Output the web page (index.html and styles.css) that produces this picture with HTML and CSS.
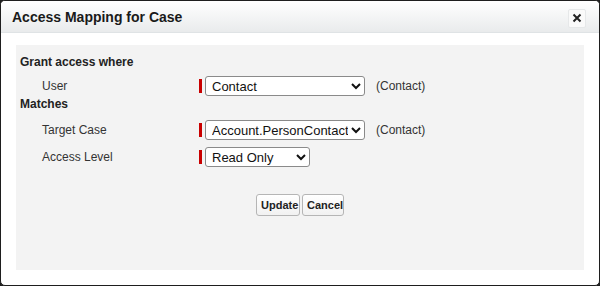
FILE: index.html
```html
<!DOCTYPE html>
<html>
<head>
<meta charset="utf-8">
<link rel="stylesheet" href="styles.css">
</head>
<body>
<div class="dialog">
  <div class="header">
    <h2 class="title">Access Mapping for Case</h2>
    <button class="close" type="button" aria-label="Close"><svg width="10" height="10" viewBox="0 0 10 10"><path d="M1.5 1.5 L8.5 8.5 M8.5 1.5 L1.5 8.5" stroke="#222" stroke-width="2" stroke-linecap="butt" fill="none"/></svg></button>
  </div>
  <div class="content">
    <div class="panel">
      <h3 class="section">Grant access where</h3>
      <div class="field first">
        <label class="label">User</label>
        <span class="req"></span>
        <select class="sel wide"><option>Contact</option></select>
        <span class="note">(Contact)</span>
      </div>
      <h3 class="section matches">Matches</h3>
      <div class="field second">
        <label class="label">Target Case</label>
        <span class="req"></span>
        <select class="sel wide"><option>Account.PersonContact</option></select>
        <span class="note">(Contact)</span>
      </div>
      <div class="field third">
        <label class="label">Access Level</label>
        <span class="req"></span>
        <select class="sel narrow"><option>Read Only</option></select>
      </div>
      <div class="buttons">
        <button class="btn upd" type="button">Update</button>
        <button class="btn cancel" type="button">Cancel</button>
      </div>
    </div>
  </div>
</div>
</body>
</html>
```

FILE: styles.css
```css
html, body {
  margin: 0;
  padding: 0;
  background: #1e1e1e;
}
body {
  width: 600px;
  height: 286px;
  font-family: "Liberation Sans", Arial, sans-serif;
  color: #222;
}
.dialog {
  box-sizing: border-box;
  width: 600px;
  height: 286px;
  border: 1px solid #1e1e1e;
  border-radius: 5px;
  background: #fff;
  overflow: hidden;
  display: flex;
  flex-direction: column;
}
.header {
  height: 31px;
  flex: none;
  display: flex;
  align-items: center;
  justify-content: space-between;
  padding: 0 13px 0 11px;
  background: linear-gradient(#ffffff, #e9ebec);
  border-bottom: 1px solid #dfe3e5;
}
.title {
  margin: 0;
  font-size: 14px;
  font-weight: bold;
  color: #1a1a1a;
  padding-top: 1px;
}
.close {
  width: 18px;
  height: 19px;
  padding: 0;
  border: 1px solid #e6e8e9;
  border-radius: 2px;
  background: #fafafa;
  display: flex;
  align-items: center;
  justify-content: center;
  margin-top: 3px;
}
.close svg {
  display: block;
}
.content {
  flex: 1;
  padding: 12px 15px 15px 15px;
  display: flex;
}
.panel {
  flex: 1;
  background: #f3f3f3;
  padding: 8px 4px 0 4px;
}
.section {
  margin: 0;
  font-size: 12px;
  font-weight: bold;
  line-height: 18px;
  color: #222;
}
.section.matches {
  line-height: 16px;
}
.field {
  display: flex;
  align-items: center;
  height: 20px;
  font-size: 12px;
  color: #333;
}
.field.first { margin-top: 5px; }
.field.second { margin-top: 8px; }
.field.third { margin-top: 7px; }
.label {
  width: 157px;
  padding-left: 22px;
}
.req {
  width: 3px;
  height: 14px;
  background: #c90000;
  margin-right: 3px;
}
.sel {
  box-sizing: border-box;
  height: 20px;
  font-family: "Liberation Sans", Arial, sans-serif;
  font-size: 13px;
  color: #111;
  background: #fff;
  border: 1px solid #8a8a8a;
  border-radius: 3px;
  padding: 0 0 0 2px;
}
.sel.wide { width: 160px; }
.sel.narrow { width: 105px; }
.note {
  margin-left: 11px;
  font-size: 12px;
  color: #333;
}
.buttons {
  margin-top: 27px;
  display: flex;
  justify-content: center;
  gap: 2px;
}
.btn {
  box-sizing: border-box;
  height: 22px;
  padding: 0 4px;
  font-family: "Liberation Sans", Arial, sans-serif;
  font-size: 11px;
  font-weight: bold;
  color: #222;
  background: linear-gradient(#ffffff, #f1f1f1);
  border: 1px solid #b5b5b5;
  border-radius: 3px;
}
.btn.upd { width: 44px; }
.btn.cancel { width: 42px; }
```
